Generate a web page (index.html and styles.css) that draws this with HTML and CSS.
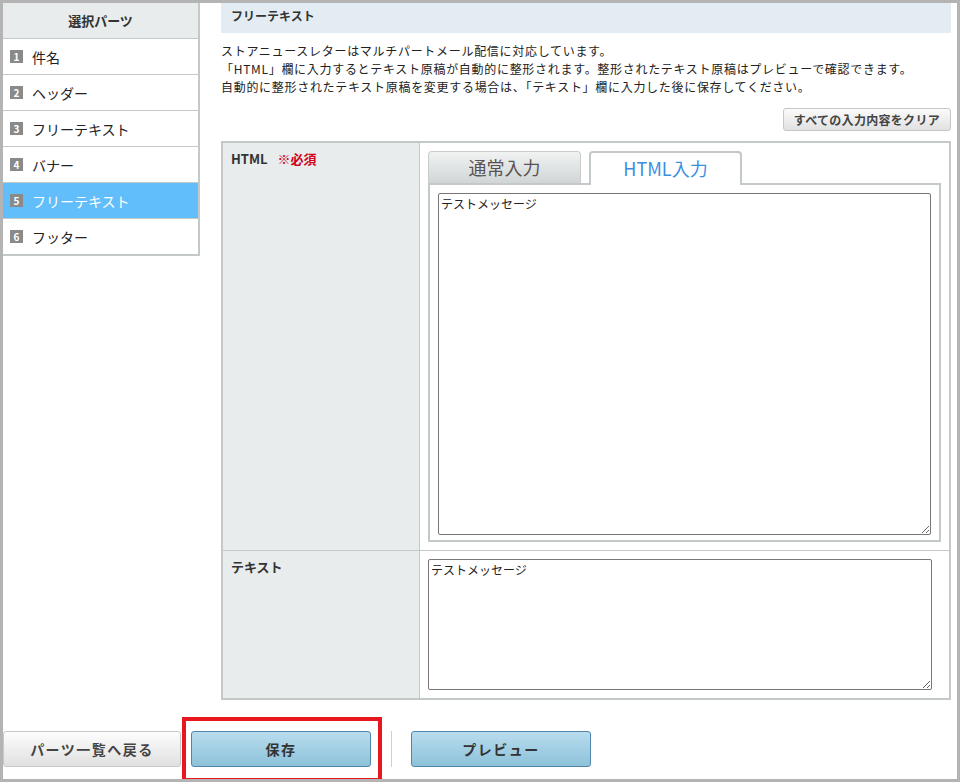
FILE: index.html
```html
<!DOCTYPE html>
<html lang="ja">
<head>
    <meta charset="UTF-8">
    <title>フリーテキスト編集</title>
    <link rel="stylesheet" href="styles.css">
</head>
<body>
    <div class="frame">
        <div class="layout">
            <aside class="parts">
                <div class="parts-head">選択パーツ</div>
                <ul class="parts-list">
                    <li><span class="num">1</span>件名</li>
                    <li><span class="num">2</span>ヘッダー</li>
                    <li><span class="num">3</span>フリーテキスト</li>
                    <li><span class="num">4</span>バナー</li>
                    <li class="current"><span class="num">5</span>フリーテキスト</li>
                    <li><span class="num">6</span>フッター</li>
                </ul>
            </aside>

            <main class="content">
                <h2 class="section-title">フリーテキスト</h2>
                <p class="note">
                    ストアニュースレターはマルチパートメール配信に対応しています。<br>
                    「HTML」欄に入力するとテキスト原稿が自動的に整形されます。整形されたテキスト原稿はプレビューで確認できます。<br>
                    自動的に整形されたテキスト原稿を変更する場合は、「テキスト」欄に入力した後に保存してください。
                </p>
                <div class="tools">
                    <button class="btn-clear">すべての入力内容をクリア</button>
                </div>

                <div class="form-table">
                    <div class="row">
                        <div class="label">HTML<span class="required">※必須</span></div>
                        <div class="field">
                            <div class="tabs">
                                <span class="tab">通常入力</span>
                                <span class="tab active">HTML入力</span>
                            </div>
                            <div class="tab-panel">
                                <textarea class="html-area">テストメッセージ</textarea>
                            </div>
                        </div>
                    </div>
                    <div class="row">
                        <div class="label">テキスト</div>
                        <div class="field">
                            <textarea class="text-area">テストメッセージ</textarea>
                        </div>
                    </div>
                </div>
            </main>
        </div>

        <div class="actions">
            <button class="btn btn-back">パーツ一覧へ戻る</button>
            <button class="btn btn-blue">保存</button>
            <span class="sep"></span>
            <button class="btn btn-blue">プレビュー</button>
        </div>

        <div class="mark"></div>
    </div>
</body>
</html>
```

FILE: styles.css
```css
* {
    margin: 0;
    padding: 0;
    box-sizing: border-box;
}

body {
    font-family: "Noto Sans CJK JP", "Liberation Sans", sans-serif;
    font-size: 12px;
    color: #222;
    background: #fff;
}

.frame {
    position: relative;
    width: 960px;
    height: 782px;
    border: 3px solid #b4b4b4;
    overflow: hidden;
}

.layout {
    display: flex;
    align-items: flex-start;
}

/* sidebar */
.parts {
    width: 197px;
    border-right: 2px solid #c3c8c8;
    border-bottom: 2px solid #c3c8c8;
}

.parts-head {
    height: 36px;
    line-height: 35px;
    text-align: center;
    font-size: 13px;
    font-weight: bold;
    color: #333;
    background: #e8ecec;
    border-bottom: 1px solid #c3c8c8;
}

.parts-list {
    list-style: none;
}

.parts-list li {
    display: flex;
    align-items: center;
    height: 36px;
    padding-left: 7px;
    font-size: 14px;
    color: #222;
    border-bottom: 1px solid #c3c8c8;
}

.parts-list li:last-child {
    height: 35px;
    border-bottom: none;
}

.parts-list .num {
    width: 13px;
    height: 13px;
    margin-right: 9px;
    background: #8a8a8a;
    color: #fff;
    font-size: 10px;
    font-weight: bold;
    line-height: 13px;
    text-align: center;
}

.parts-list li.current {
    background: #61befb;
    color: #fff;
}

/* main */
.content {
    width: 730px;
    margin-left: 21px;
}

.section-title {
    height: 30px;
    line-height: 26px;
    padding-left: 10px;
    font-size: 12px;
    font-weight: bold;
    color: #333;
    background: #e2ecf2;
}

.note {
    margin-top: 9px;
    line-height: 18px;
    font-size: 12px;
    letter-spacing: 0.7px;
    color: #222;
}

.tools {
    display: flex;
    justify-content: flex-end;
    margin-top: 12px;
}

.btn-clear {
    height: 23px;
    padding: 0 10px;
    font-family: inherit;
    font-size: 12px;
    font-weight: bold;
    letter-spacing: 0.3px;
    color: #444;
    background: linear-gradient(#fbfbfb, #e1e1e1);
    border: 1px solid #c6c6c6;
    border-radius: 3px;
}

.form-table {
    margin-top: 10px;
    border: 2px solid #c3c8c8;
}

.row {
    display: flex;
    border-bottom: 1px solid #c3c8c8;
}

.row:last-child {
    border-bottom: none;
}

.label {
    width: 197px;
    padding: 6px 8px;
    font-size: 13px;
    font-weight: bold;
    color: #333;
    background: #e8ecec;
    border-right: 1px solid #c3c8c8;
}

.required {
    margin-left: 10px;
    color: #d0021b;
}

.field {
    flex: 1;
    padding: 8px;
}

.tabs {
    display: flex;
    gap: 8px;
}

.tab {
    width: 153px;
    height: 32px;
    line-height: 31px;
    text-align: center;
    font-size: 18px;
    color: #5a5252;
    background: linear-gradient(#f1f3f3, #d1d5d5);
    border: 1px solid #c8cccc;
    border-bottom: none;
    border-radius: 4px 4px 0 0;
}

.tab.active {
    height: 34px;
    margin-bottom: -2px;
    color: #3b8fdf;
    background: #fff;
    border: 2px solid #c3c8c8;
    border-bottom: none;
    position: relative;
}

.tab-panel {
    padding: 8px 8px 5px;
    border: 2px solid #c3c8c8;
}

textarea {
    display: block;
    padding: 2px;
    font-family: inherit;
    font-size: 12px;
    line-height: 16px;
    color: #222;
    border: 1px solid #777;
    border-radius: 2px;
}

.html-area {
    width: 100%;
    height: 342px;
}

.text-area {
    width: 504px;
    height: 131px;
}

/* footer buttons */
.actions {
    display: flex;
    align-items: center;
    margin-top: 31px;
}

.btn {
    width: 178px;
    height: 36px;
    font-family: inherit;
    font-size: 14px;
    font-weight: bold;
    letter-spacing: 1.5px;
    color: #333;
    border-radius: 3px;
}

.btn-back {
    color: #444;
    background: linear-gradient(#fdfdfd, #e0e0e0);
    border: 1px solid #c8c8c8;
}

.btn-blue {
    width: 180px;
    margin-left: 10px;
    background: linear-gradient(#b9dcee, #8dc2d9);
    border: 1px solid #4f86aa;
}

.sep {
    width: 1px;
    height: 36px;
    margin: 0 9px 0 20px;
    background: #d0d0d0;
}

.sep + .btn-blue {
    margin-left: 10px;
}

/* red highlight drawn over the save button */
.mark {
    position: absolute;
    left: 179px;
    top: 714px;
    width: 200px;
    height: 65px;
    border: 4px solid #e8171e;
}
```
